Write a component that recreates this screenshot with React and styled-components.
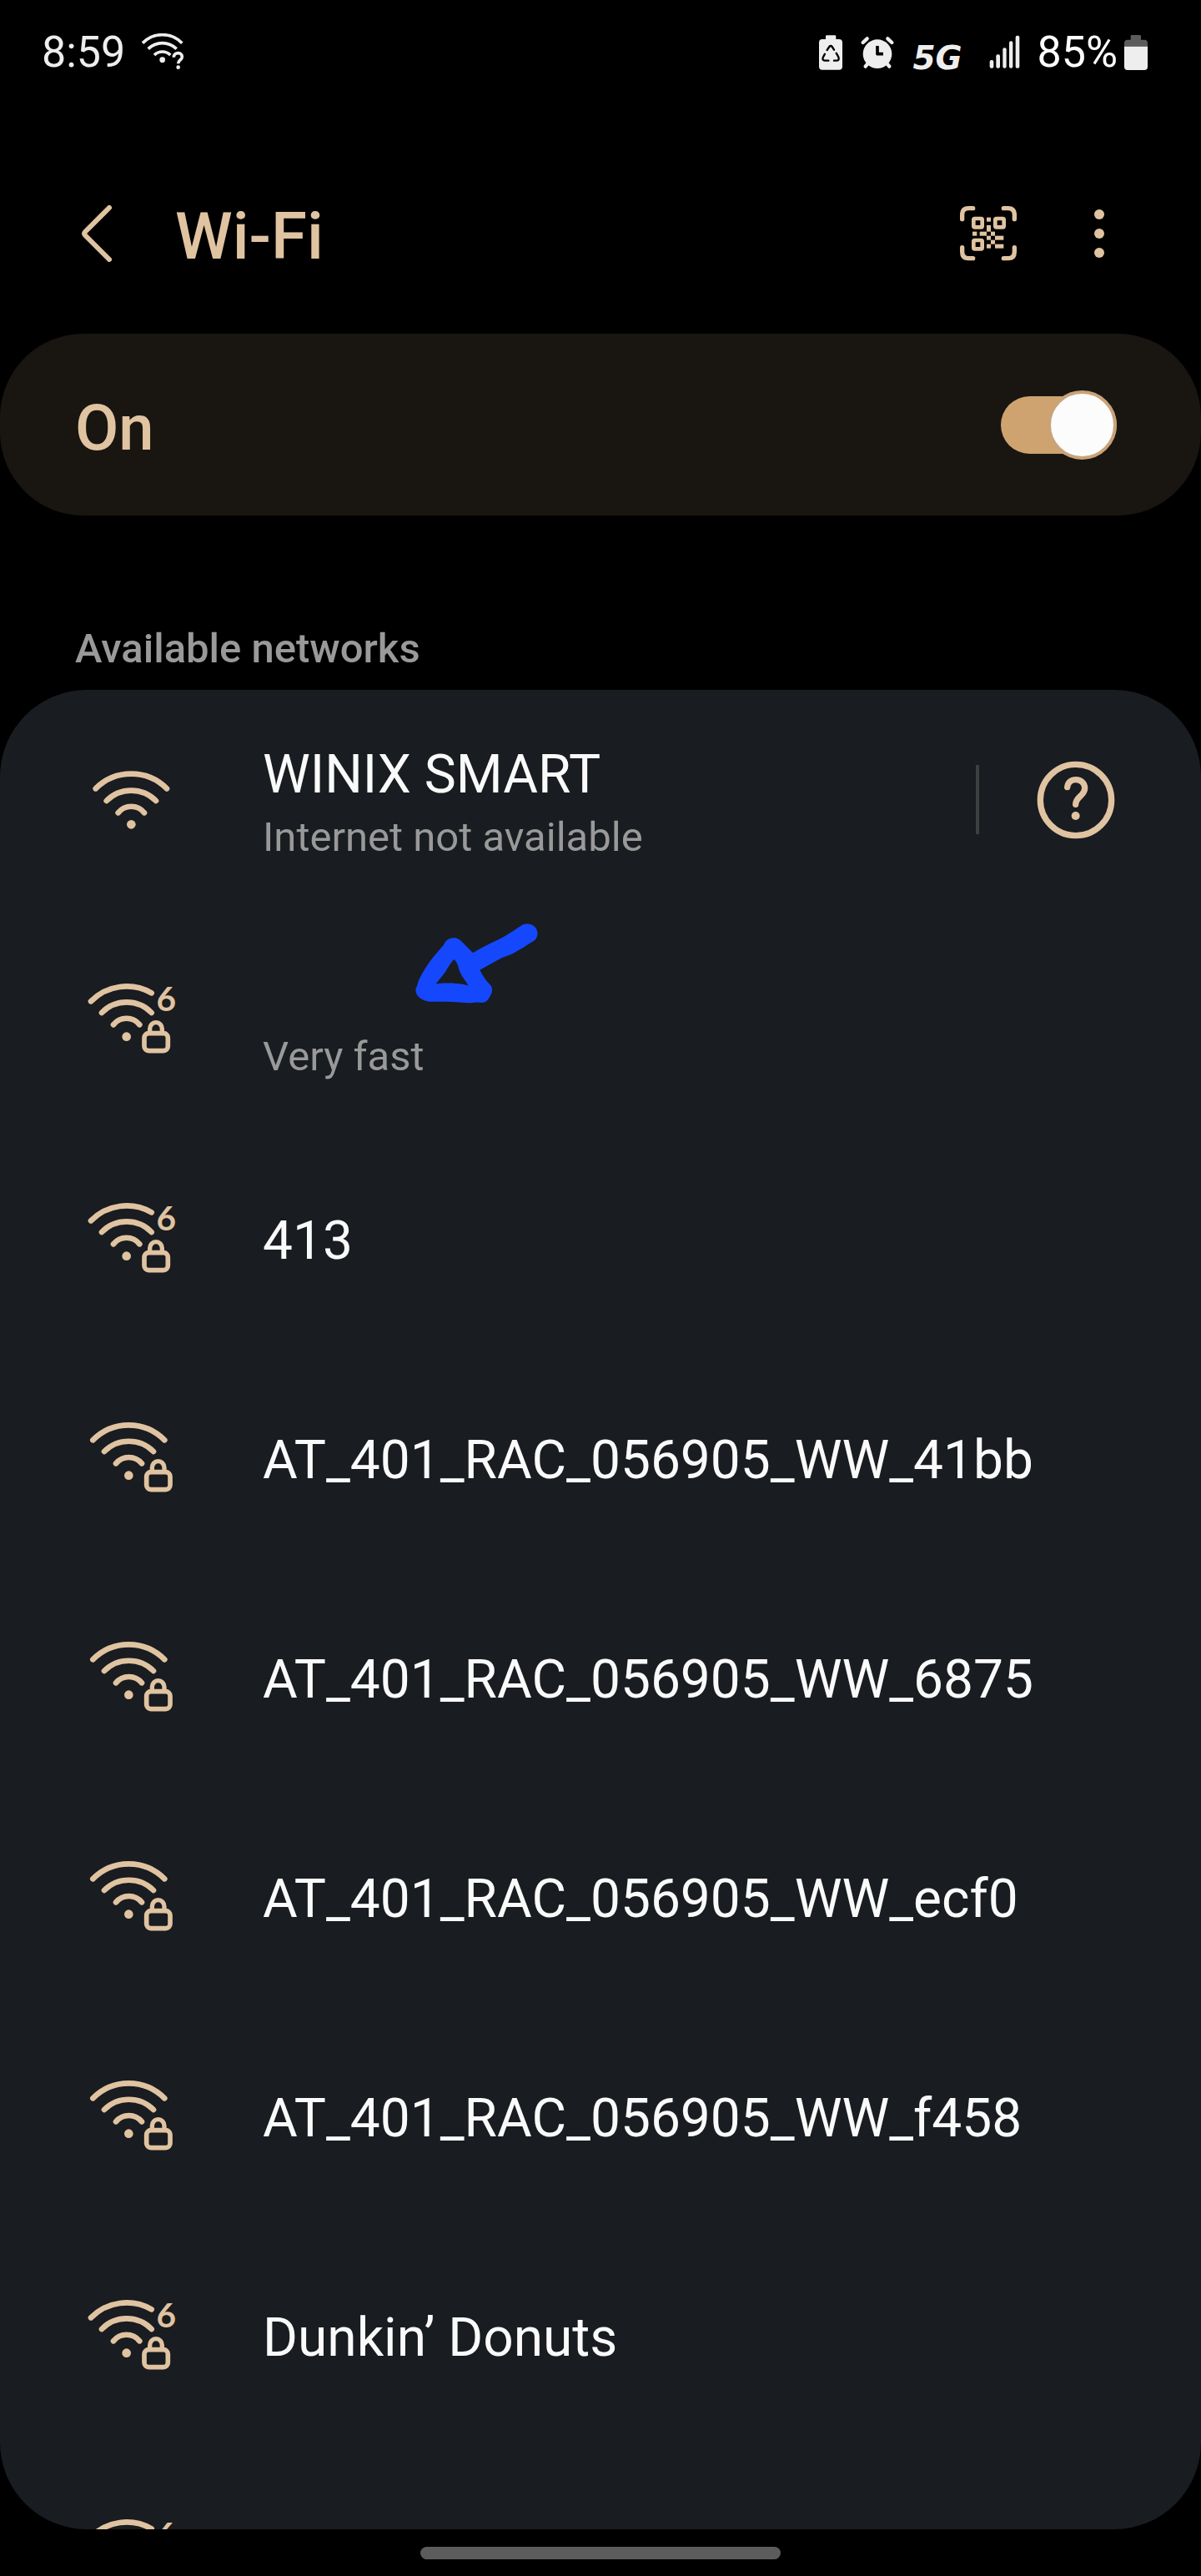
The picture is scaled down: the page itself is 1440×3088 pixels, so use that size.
import { useState } from 'react';
import styled, { createGlobalStyle } from 'styled-components';

const networks = [
  { name: 'WINIX SMART', detail: 'Internet not available', type: 'open', help: true },
  { name: '', detail: 'Very fast', type: 'wifi6', marked: true },
  { name: '413', type: 'wifi6' },
  { name: 'AT_401_RAC_056905_WW_41bb', type: 'locked' },
  { name: 'AT_401_RAC_056905_WW_6875', type: 'locked' },
  { name: 'AT_401_RAC_056905_WW_ecf0', type: 'locked' },
  { name: 'AT_401_RAC_056905_WW_f458', type: 'locked' },
  { name: 'Dunkin’ Donuts', type: 'wifi6' },
  { name: '', type: 'wifi6' }
];

export default function App() {
  const [wifiOn, setWifiOn] = useState(true);

  return (
    <>
      <GlobalStyle />
      <Screen>
        <StatusBar>
          <StatusGroup>
            <StatusText>8:59</StatusText>
            <StatusWifi />
          </StatusGroup>
          <StatusGroup>
            <RecycleBattery />
            <Alarm />
            <NetworkLabel>5G</NetworkLabel>
            <SignalBars />
            <BatteryLevel>
              <StatusText>85%</StatusText>
              <Battery />
            </BatteryLevel>
          </StatusGroup>
        </StatusBar>

        <Header>
          <IconButton type='button' aria-label='Back'>
            <svg width='36' height='68' viewBox='0 0 36 68' {...stroke(6)}>
              <path d='M33 3 L4 32 Q2 34 4 36 L33 65' />
            </svg>
          </IconButton>
          <Title>Wi-Fi</Title>
          <Actions>
            <IconButton type='button' aria-label='Scan QR code'>
              <QrCode />
            </IconButton>
            <IconButton type='button' aria-label='More options'>
              <svg width='12' height='60' viewBox='0 0 12 60' fill='currentColor'>
                <circle cx='6' cy='7' r='6' />
                <circle cx='6' cy='30' r='6' />
                <circle cx='6' cy='53' r='6' />
              </svg>
            </IconButton>
          </Actions>
        </Header>

        <SwitchCard htmlFor='wifi'>
          <SwitchLabel>{wifiOn ? 'On' : 'Off'}</SwitchLabel>
          <Switch
            id='wifi'
            type='checkbox'
            role='switch'
            checked={wifiOn}
            onChange={(e) => setWifiOn(e.target.checked)}
          />
        </SwitchCard>

        <SectionTitle>Available networks</SectionTitle>
        <NetworkList>
          {networks.map((network, i) => (
            <NetworkRow key={i}>
              <NetworkIcon type={network.type} />
              <NetworkText>
                <NetworkName>{network.name}</NetworkName>
                {network.detail && <NetworkDetail>{network.detail}</NetworkDetail>}
              </NetworkText>
              {network.help && (
                <HelpArea>
                  <IconButton type='button' aria-label='Network help'>
                    <Help />
                  </IconButton>
                </HelpArea>
              )}
              {network.marked && <Arrow />}
            </NetworkRow>
          ))}
        </NetworkList>

        <NavBar>
          <NavHandle />
        </NavBar>
      </Screen>
    </>
  );
}

function stroke(width) {
  return {
    fill: 'none',
    stroke: 'currentColor',
    strokeWidth: width,
    strokeLinecap: 'round',
    strokeLinejoin: 'round'
  };
}

function NetworkIcon({ type }) {
  if (type === 'open') {
    return (
      <svg width='140' height='134' viewBox='0 -5 420 402' {...stroke(20)}>
        <path d='M74 155 A181 181 0 0 1 330 155' />
        <path d='M113 199 A125 125 0 0 1 291 199' />
        <path d='M155 242 A60 60 0 0 1 249 242' />
        <circle cx='202' cy='284' r='16' fill='currentColor' stroke='none' />
      </svg>
    );
  }
  if (type === 'locked') {
    return (
      <svg width='140' height='134' viewBox='0 2 420 402' {...stroke(20)}>
        <path d='M64 138 A181 181 0 0 1 322 138' />
        <path d='M105 179 A125 125 0 0 1 282 179' />
        <path d='M147 222 A60 60 0 0 1 240 222' />
        <circle cx='193' cy='265' r='16' fill='currentColor' stroke='none' />
        <rect x='257' y='253' width='85' height='63' rx='16' strokeWidth='17' />
        <path d='M277 252 V237 A22 23 0 0 1 321 237 V252' strokeWidth='16' />
      </svg>
    );
  }
  return (
    <svg width='140' height='134' viewBox='0 14 420 402' {...stroke(20)}>
      <path d='M57 150 A181 181 0 0 1 275 120' />
      <path d='M96 191 A125 125 0 0 1 275 191' />
      <path d='M138 234 A60 60 0 0 1 232 234' />
      <circle cx='185' cy='277' r='16' fill='currentColor' stroke='none' />
      <rect x='249' y='265' width='85' height='63' rx='16' strokeWidth='17' />
      <path d='M269 264 V249 A22 23 0 0 1 313 249 V264' strokeWidth='16' />
      <IconDigit x='328' y='186'>6</IconDigit>
    </svg>
  );
}

function Help() {
  return (
    <svg width='94' height='94' viewBox='-141 -141 282 282' {...stroke(22)}>
      <circle cx='0' cy='0' r='128' />
      <path d='M-31 -46 C-29 -64 -16 -73 0 -73 C19 -73 32 -60 32 -43 C32 -15 -1 -12 -1 16' />
      <circle cx='-1' cy='57' r='15' fill='currentColor' stroke='none' />
    </svg>
  );
}

function QrCode() {
  return (
    <svg width='68' height='68' viewBox='213 136 204 204' {...stroke(16)}>
      <path d='M221 186 V170 Q221 147 244 147 H260' />
      <path d='M370 147 H386 Q409 147 409 170 V186' />
      <path d='M409 288 V304 Q409 327 386 327 H370' />
      <path d='M260 327 H244 Q221 327 221 304 V288' />
      <rect x='262' y='184' width='31' height='31' rx='4' strokeWidth='14' />
      <rect x='340' y='184' width='31' height='31' rx='4' strokeWidth='14' />
      <rect x='262' y='262' width='31' height='31' rx='4' strokeWidth='14' />
      <g fill='currentColor' stroke='none'>
        <rect x='309' y='180' width='15' height='15' />
        <rect x='309' y='208' width='15' height='23' />
        <rect x='258' y='231' width='16' height='15' />
        <rect x='284' y='231' width='25' height='15' />
        <rect x='324' y='231' width='15' height='15' />
        <rect x='309' y='246' width='15' height='15' />
        <rect x='339' y='246' width='31' height='15' />
        <rect x='324' y='261' width='15' height='15' />
        <rect x='309' y='276' width='15' height='15' />
        <rect x='339' y='276' width='31' height='15' />
      </g>
    </svg>
  );
}

function StatusWifi() {
  return (
    <svg width='51' height='46' viewBox='501 126 153 138' {...stroke(11)} strokeLinecap='butt'>
      <path d='M504 161 A99 99 0 0 1 646 161' />
      <path d='M524 182 A72 72 0 0 1 626 182' />
      <path d='M546 204 A41 41 0 0 1 604 204' />
      <circle cx='575' cy='221' r='10' fill='currentColor' stroke='none' />
      <path
        d='M616 212 C616 202 623 197 632 197 C641 197 646 203 646 210 C646 222 632 222 632 235'
        strokeWidth='11'
      />
      <circle cx='632' cy='248' r='7' fill='currentColor' stroke='none' />
    </svg>
  );
}

function RecycleBattery() {
  return (
    <svg width='28' height='42' viewBox='39 33 84 126' fill='currentColor'>
      <path d='M63 48 V38 Q63 34 67 34 H96 Q100 34 100 38 V48 H111 Q123 48 123 60 V146 Q123 158 111 158 H51 Q39 158 39 146 V60 Q39 48 51 48 Z' />
      <g fill='none' stroke='#000' strokeWidth='7' strokeLinecap='round' strokeLinejoin='round'>
        <path d='M68 87 L76 75 Q81 69 86 75 L93 86' />
        <path d='M101 98 L109 112 Q113 124 103 125 H93' />
        <path d='M73 125 H60 Q50 124 53 114 L60 101' />
      </g>
    </svg>
  );
}

function Alarm() {
  return (
    <svg width='44' height='40' viewBox='183 36 132 120' {...stroke(13)}>
      <circle cx='249' cy='101' r='52' fill='currentColor' stroke='none' />
      <path d='M197 60 L212 46 M286 46 L301 60' />
      <path d='M206 146 L216 134 M292 146 L282 134' />
      <path d='M249 72 V101 H270' stroke='#000' strokeWidth='11' strokeLinecap='butt' />
    </svg>
  );
}

function SignalBars() {
  return (
    <svg width='37' height='42' viewBox='684 125 111 126' fill='currentColor'>
      <rect x='686' y='215' width='14' height='29' rx='6' />
      <rect x='709' y='195' width='14' height='49' rx='6' />
      <rect x='733' y='171' width='13' height='73' rx='6' />
      <rect x='756' y='147' width='13' height='97' rx='6' />
      <rect x='779' y='127' width='14' height='117' rx='6' />
    </svg>
  );
}

function Battery() {
  return (
    <svg width='28' height='42' viewBox='0 0 84 126'>
      <path
        d='M23 17 V4 Q23 0 27 0 H56 Q60 0 60 4 V17 H72 Q84 17 84 29 V41 H0 V29 Q0 17 12 17 Z'
        fill='#5c5c5c'
      />
      <path d='M0 41 H84 V114 Q84 126 72 126 H12 Q0 126 0 114 Z' fill='#eee' />
    </svg>
  );
}

// hand-drawn marker pointing at the second network
function Arrow() {
  return (
    <ArrowSvg viewBox='0 0 570 390'>
      <path
        fillRule='evenodd'
        d='M438 57 C455 48 478 53 488 68 C498 84 494 104 480 114 C462 124 448 134 430 145
          C405 161 385 168 362 176 L286 218 C296 238 306 254 318 266 C330 276 333 290 328 302
          C322 316 314 330 304 334 C292 339 280 332 268 335 C246 338 220 336 200 334
          C168 330 136 334 104 332 C86 330 70 322 61 309 C54 299 53 286 60 276
          C63 264 66 254 72 244 C82 222 98 200 112 180 C128 160 142 144 156 128
          C162 110 180 100 198 103 C208 105 216 112 224 119 L261 157
          C290 138 320 124 350 110 C372 100 386 90 402 80 C416 72 426 64 438 57 Z
          M193 180 C180 194 172 208 164 222 C152 240 138 254 128 269
          C150 265 176 265 200 267 C216 268 230 270 245 275 C234 256 220 240 213 222
          C208 206 206 192 193 180 Z'
      />
    </ArrowSvg>
  );
}

const GlobalStyle = createGlobalStyle`
  * {
    box-sizing: border-box;
  }

  body {
    margin: 0;
    background: #000;
    font-family: Roboto, sans-serif;
  }
`;

const Screen = styled.div`
  display: flex;
  flex-direction: column;
  height: 100vh;
  background: #000;
  color: #e0c3a1;
`;

const StatusBar = styled.div`
  display: flex;
  justify-content: space-between;
  align-items: center;
  flex-shrink: 0;
  height: 126px;
  padding: 0 64px 0 50px;
  color: #eee;
`;

const StatusGroup = styled.div`
  display: flex;
  align-items: center;
  gap: 20px;
`;

const StatusText = styled.span`
  font-size: 52px;
  line-height: 60px;
`;

const NetworkLabel = styled.span`
  width: 72px;
  padding-top: 14px;
  font-family: 'DejaVu Sans', sans-serif;
  font-size: 39px;
  font-style: italic;
  font-weight: bold;
  line-height: 48px;
`;

const BatteryLevel = styled.div`
  display: flex;
  align-items: center;
  gap: 8px;
  color: #fff;
`;

const Header = styled.header`
  display: flex;
  align-items: center;
  flex-shrink: 0;
  height: 240px;
  margin-top: 34px;
  padding: 0 116px 0 98px;
`;

const Title = styled.h1`
  margin: 0 0 0 76px;
  padding-top: 8px;
  font-size: 78px;
  font-weight: 500;
  line-height: 92px;
`;

const Actions = styled.div`
  display: flex;
  align-items: center;
  gap: 93px;
  margin-left: auto;
`;

const IconButton = styled.button`
  display: flex;
  padding: 0;
  border: none;
  background: none;
  color: inherit;
  cursor: pointer;
`;

const SwitchCard = styled.label`
  display: flex;
  justify-content: space-between;
  align-items: center;
  flex-shrink: 0;
  height: 218px;
  padding: 0 101px 0 90px;
  border-radius: 100px;
  background: #191611;
  cursor: pointer;
`;

const SwitchLabel = styled.span`
  padding-top: 8px;
  font-size: 76px;
  font-weight: 500;
  line-height: 88px;
`;

const Switch = styled.input`
  appearance: none;
  position: relative;
  width: 139px;
  height: 69px;
  margin: 0;
  border-radius: 35px;
  background: ${(props) => (props.checked ? '#cfa36f' : '#5c5c5c')};
  cursor: pointer;

  &::after {
    content: '';
    position: absolute;
    top: -7px;
    ${(props) => (props.checked ? 'right: 0;' : 'left: 0;')}
    box-sizing: border-box;
    width: 83px;
    height: 83px;
    border: 4px solid #c9a379;
    border-radius: 50%;
    background: #fcfcfc;
  }
`;

const SectionTitle = styled.h2`
  flex-shrink: 0;
  margin: 0;
  padding: 127px 90px 16px;
  color: #999;
  font-size: 49px;
  font-weight: 500;
  line-height: 66px;
`;

const NetworkList = styled.ul`
  flex: 1;
  min-height: 0;
  margin: 0;
  padding: 0;
  overflow-y: auto;
  scrollbar-width: none;
  border-radius: 104px;
  background: #191c20;
  list-style: none;
`;

const NetworkRow = styled.li`
  position: relative;
  display: flex;
  align-items: center;
  height: 263px;
  padding: 0 103px 0 90px;
`;

const NetworkText = styled.div`
  flex: 1;
  padding-top: 6px;
  margin-left: 85px;
`;

const NetworkName = styled.div`
  min-height: 84px;
  color: #fafafa;
  font-size: 64px;
  line-height: 84px;
`;

const NetworkDetail = styled.div`
  color: #999;
  font-size: 49px;
  line-height: 66px;
`;

const HelpArea = styled.div`
  display: flex;
  align-items: center;
  height: 83px;
  padding-left: 69px;
  border-left: 4px solid #3e3f41;
`;

const IconDigit = styled.text`
  fill: currentColor;
  stroke: none;
  font-family: Lato, sans-serif;
  font-size: 122px;
  font-weight: 700;
  text-anchor: middle;
`;

const ArrowSvg = styled.svg`
  position: absolute;
  top: 0;
  left: 480px;
  width: 190px;
  height: 130px;
  fill: #1548fd;
`;

const NavBar = styled.div`
  display: flex;
  justify-content: center;
  align-items: center;
  flex-shrink: 0;
  height: 56px;
`;

const NavHandle = styled.div`
  width: 30%;
  height: 15px;
  border-radius: 8px;
  background: #5c5c5c;
`;
